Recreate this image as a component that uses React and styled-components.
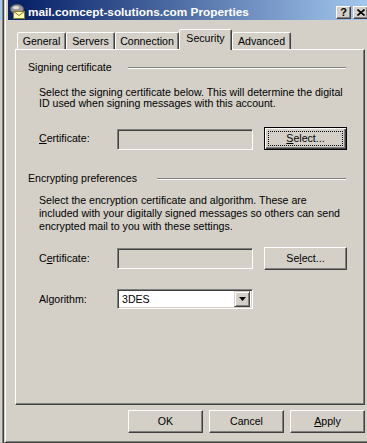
import React from 'react';
import styled, { createGlobalStyle, css } from 'styled-components';

const FACE = '#D4D0C8';
const SHADOW = '#808080';
const DARK = '#404040';

const Global = createGlobalStyle`
  html, body { margin: 0; padding: 0; }
  body {
    background: ${FACE};
    font-family: "Liberation Sans", Arial, sans-serif;
    font-size: 10.6px;
    color: #000;
  }
`;

const Screen = styled.div`
  width: 367px;
  height: 443px;
  overflow: hidden;
  display: flex;
  background: ${FACE};
`;

const BehindEdge = styled.div`
  flex: none;
  width: 4px;
  height: 100%;
  background: linear-gradient(to bottom, #A6CAF0 0 20px, ${FACE} 20px);
  box-shadow: inset -1px 0 ${DARK}, inset -2px 0 ${SHADOW};
`;

const Dialog = styled.div`
  flex: none;
  box-sizing: border-box;
  width: 372px;
  height: 447px;
  margin-top: -4px;
  padding: 3px;
  border: 1px solid;
  border-color: ${FACE} ${DARK} ${DARK} ${FACE};
  box-shadow: inset 1px 1px #fff, inset -1px -1px ${SHADOW};
  background: ${FACE};
  display: flex;
  flex-direction: column;
`;

const TitleBar = styled.div`
  box-sizing: border-box;
  height: 20px;
  display: flex;
  align-items: flex-end;
  padding: 0 4px 1px 2px;
  background: linear-gradient(to right, #0A246A 0%, #0A246A 5%, #A6CAF0 100%);
`;

const TitleIcon = styled.svg`
  flex: none;
  width: 16px;
  height: 16px;
  margin-right: 2px;
`;

const TitleText = styled.div`
  flex: 1;
  font-size: 11.8px;
  font-weight: bold;
  line-height: 14px;
  color: #fff;
  white-space: nowrap;
`;

const CaptionButton = styled.div`
  flex: none;
  box-sizing: border-box;
  width: 15px;
  height: 13px;
  margin-left: ${p => p.$gap || 0}px;
  border: 1px solid;
  border-color: #fff ${DARK} ${DARK} #fff;
  box-shadow: inset -1px -1px ${SHADOW};
  background: ${FACE};
  display: flex;
  align-items: center;
  justify-content: center;
  font-size: 11px;
  font-weight: bold;
  line-height: 11px;
`;

const TabRow = styled.div`
  display: flex;
  align-items: flex-end;
  height: 20px;
  margin: 9px 7px 0;
  padding-left: 2px;
  position: relative;
  z-index: 1;
`;

const Tab = styled.div`
  flex: none;
  box-sizing: border-box;
  width: ${p => p.$w}px;
  height: ${p => (p.$active ? 21 : 17)}px;
  margin-bottom: ${p => (p.$active ? -1 : 0)}px;
  border: 1px solid;
  border-bottom: none;
  border-color: #fff ${DARK} transparent #fff;
  border-radius: 2px 2px 0 0;
  box-shadow: inset -1px 0 ${SHADOW};
  background: ${FACE};
  display: flex;
  justify-content: center;
  padding-top: 2px;
  line-height: 12px;
  white-space: nowrap;
`;

const Panel = styled.div`
  box-sizing: border-box;
  height: 356px;
  margin: 0 7px;
  border: 1px solid;
  border-color: #fff ${DARK} ${DARK} #fff;
  box-shadow: inset -1px -1px ${SHADOW};
  padding: 11px 18px 0 12px;
  display: flex;
  flex-direction: column;
`;

const GroupHeader = styled.div`
  display: flex;
  align-items: center;
  height: 13px;
  line-height: 13px;
  margin-top: ${p => p.$top || 0}px;
`;

const GroupLine = styled.div`
  flex: 1;
  height: 0;
  margin-left: ${p => p.$gap}px;
  border-top: 1px solid ${SHADOW};
  border-bottom: 1px solid #fff;
`;

const Para = styled.p`
  margin: ${p => p.$top}px 0 0 11px;
  line-height: ${p => p.$lh || 13}px;
`;

const FieldRow = styled.div`
  display: flex;
  align-items: ${p => p.$align || 'center'};
  margin: ${p => p.$top}px 0 0 11px;
`;

const FieldLabel = styled.div`
  flex: none;
  width: 78px;
  align-self: center;
  line-height: 13px;
`;

const sunken = css`
  box-sizing: border-box;
  border: 1px solid;
  border-color: ${SHADOW} #fff #fff ${SHADOW};
  box-shadow: inset 1px 1px ${DARK}, inset -1px -1px ${FACE};
`;

const TextBox = styled.div`
  ${sunken};
  flex: none;
  width: 136px;
  height: 21px;
  background: ${FACE};
`;

const PushButton = styled.div`
  flex: none;
  box-sizing: border-box;
  position: relative;
  width: ${p => p.$w || 75}px;
  height: 23px;
  margin-left: ${p => p.$gap || 0}px;
  border: 1px solid;
  border-color: #fff ${DARK} ${DARK} #fff;
  box-shadow: inset -1px -1px ${SHADOW};
  background: ${FACE};
  display: flex;
  align-items: center;
  justify-content: center;
  line-height: 13px;
  ${p => p.$default && css`
    border-color: #000;
    box-shadow: inset 1px 1px #fff, inset -1px -1px ${DARK}, inset -2px -2px ${SHADOW};
    &::after {
      content: '';
      position: absolute;
      inset: 3px;
      border: 1px dotted #000;
    }
  `}
`;

const Combo = styled.div`
  ${sunken};
  flex: none;
  width: 136px;
  height: 20px;
  padding: 2px;
  background: #fff;
  display: flex;
  align-items: center;
`;

const ComboValue = styled.div`
  flex: 1;
  padding-left: 2px;
  line-height: 13px;
`;

const ComboButton = styled.div`
  flex: none;
  box-sizing: border-box;
  width: 16px;
  height: 16px;
  border: 1px solid;
  border-color: ${FACE} ${DARK} ${DARK} ${FACE};
  box-shadow: inset 1px 1px #fff, inset -1px -1px ${SHADOW};
  background: ${FACE};
  display: flex;
  align-items: center;
  justify-content: center;
`;

const ButtonBar = styled.div`
  display: flex;
  justify-content: flex-end;
  margin: 5px 7px 0;
`;

const tabs = [
  { label: 'General', w: 49 },
  { label: 'Servers', w: 49 },
  { label: 'Connection', w: 64 },
  { label: 'Security', w: 53, active: true },
  { label: 'Advanced', w: 59 },
];

function MailIcon() {
  return (
    <TitleIcon viewBox="0 0 16 16">
      <ellipse cx="7" cy="6" rx="6.5" ry="4.5" fill="#9a9a9a" stroke="#5a5a5a" strokeWidth="1" />
      <ellipse cx="6" cy="4.5" rx="3" ry="1.5" fill="#e0e0e0" />
      <rect x="3.5" y="8.5" width="11" height="7" fill="#fff8b0" stroke="#8a7a30" strokeWidth="1" />
      <polyline points="3.5,8.5 9,12.5 14.5,8.5" fill="none" stroke="#8a7a30" strokeWidth="1" />
    </TitleIcon>
  );
}

export default function App() {
  return (
    <>
      <Global />
      <Screen>
        <BehindEdge />
        <Dialog>
          <TitleBar>
            <MailIcon />
            <TitleText>mail.comcept-solutions.com Properties</TitleText>
            <CaptionButton>?</CaptionButton>
            <CaptionButton $gap={2}>
              <svg width="8" height="7" viewBox="0 0 8 7">
                <path d="M0.5 0.5 L7.5 6.5 M7.5 0.5 L0.5 6.5" stroke="#000" strokeWidth="1.6" />
              </svg>
            </CaptionButton>
          </TitleBar>

          <TabRow>
            {tabs.map(t => (
              <Tab key={t.label} $w={t.w} $active={t.active}>{t.label}</Tab>
            ))}
          </TabRow>

          <Panel>
            <GroupHeader>
              Signing certificate
              <GroupLine $gap={16} />
            </GroupHeader>
            <Para $top={13} $lh={11}>
              Select the signing certificate below. This will determine the digital ID used when signing messages with this account.
            </Para>
            <FieldRow $top={18} $align="flex-end">
              <FieldLabel><u>C</u>ertificate:</FieldLabel>
              <TextBox />
              <PushButton $w={83} $gap={11} $default>
                <span><u>S</u>elect...</span>
              </PushButton>
            </FieldRow>

            <GroupHeader $top={22}>
              Encrypting preferences
              <GroupLine $gap={20} />
            </GroupHeader>
            <Para $top={9}>
              Select the encryption certificate and algorithm. These are included with your digitally signed messages so others can send encrypted mail to you with these settings.
            </Para>
            <FieldRow $top={14}>
              <FieldLabel>C<u>e</u>rtificate:</FieldLabel>
              <TextBox />
              <PushButton $w={83} $gap={11}>
                <span>Se<u>l</u>ect...</span>
              </PushButton>
            </FieldRow>
            <FieldRow $top={19}>
              <FieldLabel>Algorithm:</FieldLabel>
              <Combo>
                <ComboValue>3DES</ComboValue>
                <ComboButton>
                  <svg width="7" height="4" viewBox="0 0 7 4">
                    <path d="M0 0 H7 L3.5 4 Z" fill="#000" />
                  </svg>
                </ComboButton>
              </Combo>
            </FieldRow>
          </Panel>

          <ButtonBar>
            <PushButton>OK</PushButton>
            <PushButton $gap={6}>Cancel</PushButton>
            <PushButton $gap={6}><span><u>A</u>pply</span></PushButton>
          </ButtonBar>
        </Dialog>
      </Screen>
    </>
  );
}
